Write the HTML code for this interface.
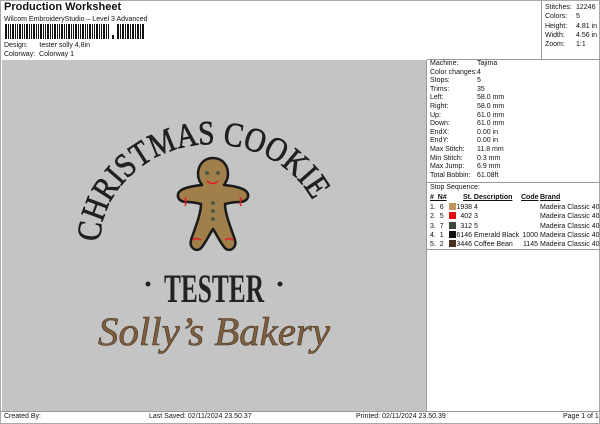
<!DOCTYPE html>
<html><head><meta charset="utf-8"><style>
*{margin:0;padding:0;box-sizing:border-box}
body{width:600px;height:424px;background:#fff;font-family:"Liberation Sans",sans-serif;color:#111;position:relative;overflow:hidden;font-size:7px}
.a{position:absolute;white-space:nowrap}
.sw{display:inline-block;width:7px;height:7px;vertical-align:-1px}
</style></head><body>
<div class="a" style="left:0;top:0;width:600px;height:424px;border:1px solid #aaa"></div>
<div class="a" style="left:4px;top:1px;font-size:11px;font-weight:bold">Production Worksheet</div>
<div class="a" style="left:4px;top:16px;font-size:7px">Wilcom EmbroideryStudio – Level 3 Advanced</div>
<div class="a" style="left:5px;top:24px;width:105px;height:15px;background:repeating-linear-gradient(90deg,#111 0 2px,#fff 2px 3px,#111 3px 4px,#fff 4px 5px,#111 5px 6px,#fff 6px 7px)"></div>
<div class="a" style="left:112px;top:35px;width:2px;height:4px;background:#111"></div>
<div class="a" style="left:117px;top:24px;width:28px;height:15px;background:repeating-linear-gradient(90deg,#111 0 2px,#fff 2px 3px,#111 3px 4px,#fff 4px 5px)"></div>
<div class="a" style="left:4px;top:42px">Design:&nbsp;&nbsp;&nbsp;&nbsp;&nbsp;&nbsp;tester solly 4,8in</div>
<div class="a" style="left:4px;top:51px">Colorway:&nbsp;&nbsp;Colorway 1</div>
<div class="a" style="left:541px;top:0;width:1px;height:60px;background:#999"></div>
<div class="a" style="left:427px;top:59px;width:173px;height:1px;background:#999"></div>
<div class="a" style="left:545px;top:3px;line-height:9.3px">Stitches:<br>Colors:<br>Height:<br>Width:<br>Zoom:</div>
<div class="a" style="left:576px;top:3px;line-height:9.3px">12246<br>5<br>4.81 in<br>4.56 in<br>1:1</div>
<div class="a" style="left:2px;top:60px;width:425px;height:351px;background:#c4c4c4;border-right:1px solid #999"></div>
<div class="a" style="left:0;top:411px;width:600px;height:1px;background:#999"></div>
<div class="a" style="left:430px;top:60px;line-height:8.6px">Machine:<br>Color changes:<br>Stops:<br>Trims:<br>Left:<br>Right:<br>Up:<br>Down:<br>EndX:<br>EndY:<br>Max Stitch:<br>Min Stitch:<br>Max Jump:<br>Total Bobbin:</div>
<div class="a" style="left:477px;top:60px;line-height:8.6px">Tajima<br>4<br>5<br>35<br>58.0 mm<br>58.0 mm<br>61.0 mm<br>61.0 mm<br>0.00 in<br>0.00 in<br>11.8 mm<br>0.3 mm<br>6.9 mm<br>61.08ft</div>
<div class="a" style="left:427px;top:182px;width:173px;height:1px;background:#999"></div>
<div class="a" style="left:430px;top:184px">Stop Sequence:</div>
<div class="a" style="left:430px;top:194px;font-weight:bold;text-decoration:underline">#&nbsp;&nbsp;N#</div>
<div class="a" style="left:463px;top:194px;font-weight:bold;text-decoration:underline">St.&nbsp;Description</div>
<div class="a" style="left:521px;top:194px;font-weight:bold;text-decoration:underline">Code</div>
<div class="a" style="left:540px;top:194px;font-weight:bold;text-decoration:underline">Brand</div>
<div class="a" style="left:430px;top:203px;line-height:9.3px">1.&nbsp;&nbsp;6<br>2.&nbsp;&nbsp;5<br>3.&nbsp;&nbsp;7<br>4.&nbsp;&nbsp;1<br>5.&nbsp;&nbsp;2</div>
<div class="a" style="left:449px;top:203px;line-height:9.3px"><span class="sw" style="background:#c0955e"></span><br><span class="sw" style="background:#e01010"></span><br><span class="sw" style="background:#3c4a3c"></span><br><span class="sw" style="background:#111"></span><br><span class="sw" style="background:#4a3020"></span></div>
<div class="a" style="left:456px;top:203px;line-height:9.3px;width:16px;text-align:right">1938<br>402<br>312<br>6146<br>3446</div>
<div class="a" style="left:474px;top:203px;line-height:9.3px">4<br>3<br>5<br>Emerald Black<br>Coffee Bean</div>
<div class="a" style="left:520px;top:203px;line-height:9.3px;width:18px;text-align:right"><br><br><br>1000<br>1145</div>
<div class="a" style="left:540px;top:203px;line-height:9.3px">Madeira Classic 40<br>Madeira Classic 40<br>Madeira Classic 40<br>Madeira Classic 40<br>Madeira Classic 40</div>
<div class="a" style="left:427px;top:249px;width:173px;height:1px;background:#999"></div>
<div class="a" style="left:4px;top:413px">Created By:</div>
<div class="a" style="left:149px;top:413px">Last Saved: 02/11/2024 23.50.37</div>
<div class="a" style="left:356px;top:413px">Printed: 02/11/2024 23.50.39</div>
<div class="a" style="left:563px;top:413px">Page 1 of 1</div>
<svg class="a" style="left:0;top:0" width="600" height="424">
<defs><path id="arc" d="M100 242 A112 100 0 0 1 318 212"/></defs>
<text font-family="Liberation Serif,serif" font-size="34" fill="#222" stroke="#111" stroke-width="0.6"><textPath href="#arc" textLength="285" lengthAdjust="spacingAndGlyphs">CHRISTMAS COOKIE</textPath></text>
<g stroke="#1a1a1a" stroke-width="2.5" fill="#a07f4a" stroke-linejoin="round">
<path d="M213 158 c-10 0 -15 8 -15 16 c0 5 2 8 4 11 c-10 1 -22 3 -24 9 c-1 5 3 8 9 8 c6 0 10 1 14 2 c0 10 -6 24 -10 36 c-2 7 4 12 9 9 c4 -3 9 -14 13 -20 c4 6 9 17 13 20 c5 3 11 -2 9 -9 c-4 -12 -10 -26 -10 -36 c4 -1 8 -2 14 -2 c6 0 10 -3 9 -8 c-2 -6 -14 -8 -24 -9 c2 -3 4 -6 4 -11 c0 -8 -5 -16 -15 -16z"/>
</g>
<g fill="#4a5a4a"><circle cx="207" cy="173" r="2"/><circle cx="218" cy="173" r="2"/><circle cx="213" cy="203" r="2"/><circle cx="213" cy="211" r="2"/><circle cx="213" cy="219" r="2"/></g>
<g stroke="#e02020" stroke-width="1.5" fill="none"><path d="M207 181 q6 5 11 0"/><path d="M186 197 l-1 3 l1 3 l-1 3"/><path d="M240 197 l1 3 l-1 3 l1 3"/><path d="M193 240 q4 -3 8 0"/><path d="M225 240 q4 -3 8 0"/></g>
<text x="214" y="302" text-anchor="middle" font-family="Liberation Serif,serif" font-weight="bold" font-size="40" fill="#222" textLength="100" lengthAdjust="spacingAndGlyphs">TESTER</text>
<circle cx="148" cy="284" r="2.5" fill="#222"/><circle cx="280" cy="284" r="2.5" fill="#222"/>
<text x="214" y="345" text-anchor="middle" font-family="Liberation Serif,serif" font-style="italic" font-size="40" fill="#7d5f3f" stroke="#4a3624" stroke-width="0.6" textLength="232" lengthAdjust="spacingAndGlyphs">Solly’s Bakery</text>
</svg>
</body></html>
